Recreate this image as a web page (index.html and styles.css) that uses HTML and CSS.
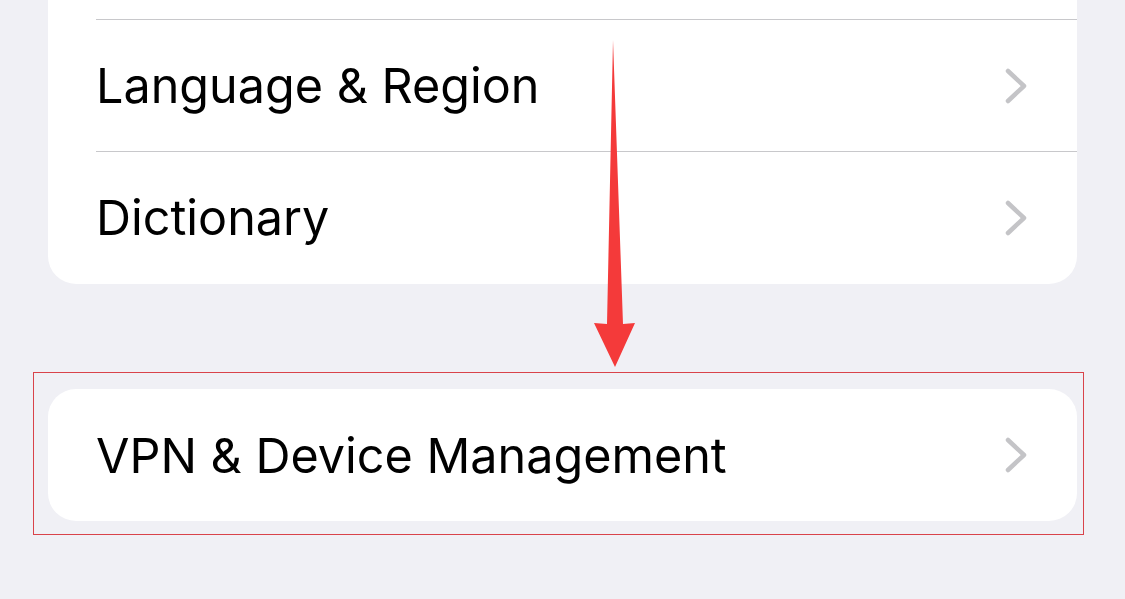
FILE: index.html
```html
<!DOCTYPE html>
<html lang="en">
<head>
  <meta charset="UTF-8">
  <meta name="viewport" content="width=device-width, initial-scale=1.0">
  <title>Settings</title>
  <link rel="stylesheet" href="styles.css">
</head>
<body>
  <div class="page">
    <!-- 위쪽 그룹 (윗부분은 화면 밖) -->
    <div class="group group-top">
      <div class="row">
        <div class="row-inner">
          <span class="label">Language &amp; Region</span>
          <svg class="chevron" viewBox="0 0 22 36"><polyline points="3,3 19,18 3,33"/></svg>
        </div>
      </div>
      <div class="row">
        <div class="row-inner">
          <span class="label">Dictionary</span>
          <svg class="chevron" viewBox="0 0 22 36"><polyline points="3,3 19,18 3,33"/></svg>
        </div>
      </div>
    </div>

    <div class="group group-vpn">
      <div class="row">
        <div class="row-inner no-line">
          <span class="label">VPN &amp; Device Management</span>
          <svg class="chevron" viewBox="0 0 22 36"><polyline points="3,3 19,18 3,33"/></svg>
        </div>
      </div>
    </div>

    <!-- 주석: 화살표와 빨간 테두리 -->
    <svg class="arrow" viewBox="0 0 50 334">
      <polygon points="23,4 33,288 45,287 25,331 4,287 17,288"/>
    </svg>
    <div class="highlight"></div>
  </div>
</body>
</html>
```

FILE: styles.css
```css
body {
  margin: 0;
  background-color: #f0f0f5;
  font-family: Inter, 'Liberation Sans', sans-serif;
  color: #000;
}

.page {
  position: relative;
  height: 599px;
  padding: 0 48px;
  overflow: hidden;
}

.group {
  background-color: #fff;
  border-radius: 28px;
}

.group-top {
  padding: 19px 0 1px;
  border-radius: 0 0 28px 28px;
}

.group-vpn {
  margin-top: 105px;
}

.row {
  padding-left: 48px;
}

.row-inner {
  height: 132px;
  box-sizing: border-box;
  display: flex;
  align-items: center;
  justify-content: space-between;
  padding-right: 50px;
  border-top: 1px solid #c8c8cb;
}

.row-inner.no-line {
  border-top: none;
}

.label {
  font-size: 48.5px;
}

.chevron {
  width: 22px;
  height: 36px;
  fill: none;
  stroke: #c4c4c7;
  stroke-width: 4.5;
  stroke-linecap: round;
  stroke-linejoin: round;
}

.arrow {
  position: absolute;
  left: 590px;
  top: 36px;
  width: 50px;
  height: 334px;
  fill: #f43a3a;
}

.highlight {
  position: absolute;
  left: 33px;
  top: 372px;
  width: 1051px;
  height: 163px;
  box-sizing: border-box;
  border: 1px solid #d9434a;
}
```
